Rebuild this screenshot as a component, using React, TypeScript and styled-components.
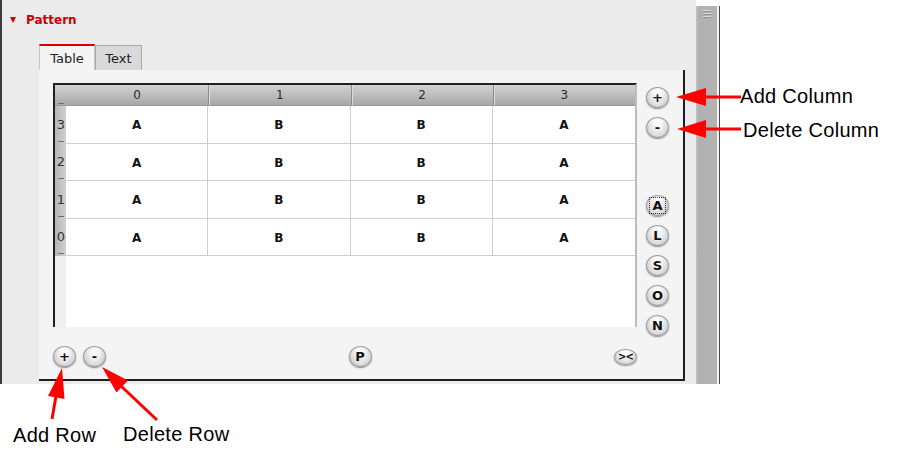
import React from 'react';
import styled, { createGlobalStyle, css } from 'styled-components';

const GlobalStyle = createGlobalStyle`
  html, body { margin: 0; padding: 0; background: #ffffff; }
  body { font-family: "DejaVu Sans", "Liberation Sans", sans-serif; }
  *, *::before, *::after { box-sizing: border-box; }
`;

const Page = styled.div`
  position: relative;
  width: 913px;
  height: 459px;
  background: #ffffff;
  overflow: hidden;
`;

const Frame = styled.div`
  display: flex;
  height: 384px;
`;

const Panel = styled.section`
  width: 696px;
  height: 100%;
  border-left: 2px solid #3a3a3a;
  background: #ebebeb;
  display: flex;
  flex-direction: column;
`;

const SectionHeader = styled.div`
  display: flex;
  align-items: center;
  height: 44px;
  padding: 13px 0 17px 8px;
`;

const Disclosure = styled.span`
  width: 0;
  height: 0;
  border-left: 3.5px solid transparent;
  border-right: 3.5px solid transparent;
  border-top: 6px solid #d40000;
  margin-right: 10px;
`;

const SectionTitle = styled.span`
  font: bold 12px/14px "DejaVu Sans", sans-serif;
  color: #cc0000;
`;

const TabBar = styled.div`
  display: flex;
  align-items: flex-end;
  height: 26px;
  margin-left: 37px;
`;

const Tab = styled.div<{ $active?: boolean }>`
  display: flex;
  align-items: center;
  justify-content: center;
  font: 13px/16px "DejaVu Sans", sans-serif;
  color: #222;
  ${(p) =>
    p.$active
      ? css`
          width: 56px;
          height: 26px;
          padding-top: 2px;
          background: #f4f4f4;
          border-top: 2px solid #d60000;
          border-left: 1px solid #c6c6c6;
          border-right: 1px solid #c6c6c6;
        `
      : css`
          width: 47px;
          height: 25px;
          padding-top: 2px;
          background: #d9d9d9;
          border: 1px solid #a9a9a9;
          border-bottom: none;
        `}
`;

const TabPane = styled.div`
  margin-left: 37px;
  width: 646px;
  height: 311px;
  background: #f4f4f4;
  border-right: 2px solid #1e1e1e;
  border-bottom: 2px solid #1e1e1e;
  padding: 13px 0 0 14px;
  display: flex;
  flex-direction: column;
`;

const TopArea = styled.div`
  display: flex;
  align-items: flex-start;
  gap: 9px;
`;

const Table = styled.div`
  width: 584px;
  height: 244px;
  border-top: 2px solid #202020;
  border-left: 2px solid #202020;
  border-right: 2px solid #bdbdbd;
  background: linear-gradient(to right, #efefef 11px, #ffffff 11px);
  display: flex;
  flex-direction: column;
`;

const columns = css`
  display: grid;
  grid-template-columns: 11px repeat(4, 1fr);
`;

const HeaderRow = styled.div`
  ${columns};
  height: 21px;
  background: linear-gradient(#d2d2d2, #a8a8a8);
  border-bottom: 1px solid #9a9a9a;
`;

const dash = css`
  background-image: linear-gradient(#6e6e6e, #6e6e6e);
  background-repeat: no-repeat;
  background-size: 6px 1px;
  background-position: 3px calc(100% - 1px);
`;

const HeaderCorner = styled.div`
  ${dash};
`;

const HeaderCell = styled.div`
  display: flex;
  align-items: center;
  justify-content: center;
  font: 12px/14px "DejaVu Sans", sans-serif;
  color: #2a2a2a;
  & + & {
    border-left: 1px solid #8c8c8c;
    box-shadow: inset 1px 0 #dcdcdc;
  }
`;

const Body = styled.div`
  ${columns};
  grid-auto-rows: 37.5px;
`;

const RowHead = styled.div`
  display: flex;
  align-items: center;
  justify-content: flex-end;
  padding-right: 1px;
  overflow: hidden;
  font: 13px/14px "DejaVu Sans", sans-serif;
  color: #333;
  background-color: #c2c2c2;
  background-image: linear-gradient(#6e6e6e, #6e6e6e),
    linear-gradient(to right, #b6b6b6, #cfcfcf);
  background-repeat: no-repeat;
  background-size: 6px 1px, 100% 100%;
  background-position: 3px calc(100% - 2px), 0 0;
`;

const Cell = styled.div<{ $last?: boolean }>`
  display: flex;
  align-items: center;
  justify-content: center;
  padding-top: 2px;
  font: bold 12px/14px "DejaVu Sans", sans-serif;
  color: #111;
  background: #ffffff;
  border-bottom: 1px solid #cfcfcf;
  border-right: ${(p) => (p.$last ? 'none' : '1px solid #cfcfcf')};
`;

const SideColumn = styled.div`
  display: flex;
  flex-direction: column;
  gap: 57px;
  padding-top: 4px;
`;

const ButtonGroup = styled.div<{ $vertical?: boolean }>`
  display: flex;
  flex-direction: ${(p) => (p.$vertical ? 'column' : 'row')};
  gap: ${(p) => (p.$vertical ? '9px' : '7px')};
`;

const RoundButton = styled.button<{ $focused?: boolean; $wide?: boolean }>`
  position: relative;
  width: 23px;
  height: ${(p) => (p.$wide ? '16px' : '21px')};
  padding: 0;
  border-radius: 50%;
  border: 1px solid #a0a0a0;
  background: radial-gradient(ellipse at 50% 20%, #ffffff 0%, #f1f1f1 35%, #c2c2c2 100%);
  box-shadow: 0 1px 1.5px rgba(0, 0, 0, 0.4);
  display: flex;
  align-items: center;
  justify-content: center;
  font: bold ${(p) => (p.$wide ? '10px' : '13px')} / 1 "DejaVu Sans", sans-serif;
  letter-spacing: ${(p) => (p.$wide ? '-1px' : '0')};
  color: #111;
  cursor: pointer;
  ${(p) =>
    p.$focused &&
    css`
      &::after {
        content: '';
        position: absolute;
        inset: 1px 2px;
        border: 1px dotted #333;
      }
    `}
`;

const BottomBar = styled.div`
  display: flex;
  align-items: center;
  justify-content: space-between;
  width: 584px;
  margin-top: 10px;
`;

const ScrollColumn = styled.div`
  display: flex;
  margin-top: 6px;
  height: 378px;
`;

const ScrollTrack = styled.div`
  width: 21px;
  background: linear-gradient(to right, #c6c6c6 0, #b1b1b1 2px, #b3b3b3 100%);
  display: flex;
  justify-content: center;
  padding-top: 4px;
`;

const Gripper = styled.div`
  width: 8px;
  height: 9px;
  background: repeating-linear-gradient(#dcdcdc 0 1px, #8f8f8f 1px 2px, transparent 2px 3px);
`;

const ScrollGap = styled.div`
  width: 2px;
  background: #f2f2f2;
`;

const ScrollEdge = styled.div`
  width: 1px;
  background: #4a4a4a;
`;

const Overlay = styled.svg`
  position: absolute;
  left: 0;
  top: 0;
  pointer-events: none;
`;

const Callout = styled.span<{ $x: number; $y: number }>`
  position: absolute;
  left: ${(p) => p.$x}px;
  top: ${(p) => p.$y}px;
  font: 20px/20px "Liberation Sans", Arial, sans-serif;
  letter-spacing: 0.3px;
  color: #000;
  white-space: nowrap;
`;

const rows = [
  { label: '3', cells: ['A', 'B', 'B', 'A'] },
  { label: '2', cells: ['A', 'B', 'B', 'A'] },
  { label: '1', cells: ['A', 'B', 'B', 'A'] },
  { label: '0', cells: ['A', 'B', 'B', 'A'] },
];

const callouts = [
  { text: 'Add Column', x: 740, y: 86 },
  { text: 'Delete Column', x: 743, y: 120 },
  { text: 'Add Row', x: 13, y: 425 },
  { text: 'Delete Row', x: 123, y: 424 },
];

export default function App() {
  return (
    <Page>
      <GlobalStyle />
      <Frame>
        <Panel>
          <SectionHeader>
            <Disclosure />
            <SectionTitle>Pattern</SectionTitle>
          </SectionHeader>
          <TabBar>
            <Tab $active>Table</Tab>
            <Tab>Text</Tab>
          </TabBar>
          <TabPane>
            <TopArea>
              <Table>
                <HeaderRow>
                  <HeaderCorner />
                  {['0', '1', '2', '3'].map((h) => (
                    <HeaderCell key={h}>{h}</HeaderCell>
                  ))}
                </HeaderRow>
                <Body>
                  {rows.map((r) => (
                    <React.Fragment key={r.label}>
                      <RowHead>{r.label}</RowHead>
                      {r.cells.map((c, i) => (
                        <Cell key={i} $last={i === 3}>
                          {c}
                        </Cell>
                      ))}
                    </React.Fragment>
                  ))}
                </Body>
              </Table>
              <SideColumn>
                <ButtonGroup $vertical>
                  <RoundButton>+</RoundButton>
                  <RoundButton>-</RoundButton>
                </ButtonGroup>
                <ButtonGroup $vertical>
                  <RoundButton $focused>A</RoundButton>
                  <RoundButton>L</RoundButton>
                  <RoundButton>S</RoundButton>
                  <RoundButton>O</RoundButton>
                  <RoundButton>N</RoundButton>
                </ButtonGroup>
              </SideColumn>
            </TopArea>
            <BottomBar>
              <ButtonGroup>
                <RoundButton>+</RoundButton>
                <RoundButton>-</RoundButton>
              </ButtonGroup>
              <RoundButton>P</RoundButton>
              <RoundButton $wide>&gt;&lt;</RoundButton>
            </BottomBar>
          </TabPane>
        </Panel>
        <ScrollColumn>
          <ScrollTrack>
            <Gripper />
          </ScrollTrack>
          <ScrollGap />
          <ScrollEdge />
        </ScrollColumn>
      </Frame>

      <Overlay width={913} height={459} viewBox="0 0 913 459">
        <g fill="#ff0000" stroke="#ff0000">
          <line x1="704" y1="97" x2="741" y2="97" strokeWidth="3" />
          <polygon points="676,97 706,88 706,106" stroke="none" />
          <line x1="704" y1="129" x2="741" y2="129" strokeWidth="3" />
          <polygon points="677,129 706,120 706,138" stroke="none" />
          <line x1="56" y1="396" x2="52" y2="419" strokeWidth="3" />
          <polygon points="62,368 64.5,399 48,396" stroke="none" />
          <line x1="121" y1="386" x2="157" y2="420" strokeWidth="3" />
          <polygon points="102,367 128,380.5 116.5,392.5" stroke="none" />
        </g>
      </Overlay>
      {callouts.map((c) => (
        <Callout key={c.text} $x={c.x} $y={c.y}>
          {c.text}
        </Callout>
      ))}
    </Page>
  );
}
